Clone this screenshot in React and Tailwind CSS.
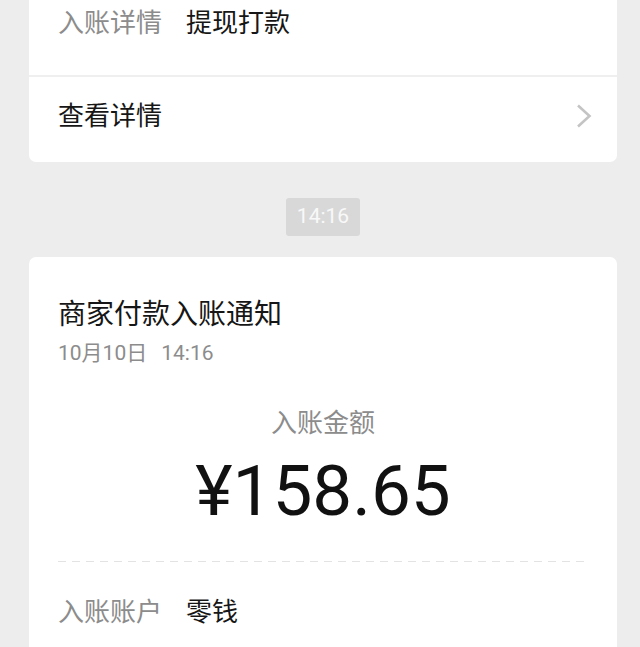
import React from "react";

export default function App() {
  return (
    <div
      className="w-[640px] h-[647px] overflow-hidden bg-[#ededed] font-['Roboto','Noto_Sans_CJK_SC',sans-serif]"
    >
      {/* Card 1 */}
      <div className="ml-[29px] w-[588px] bg-white rounded-b-[7px]">
        <div className="h-[75px] pt-[5px] pl-[29px] flex text-[26px] leading-[36px]">
          <span className="text-[#8c8c8c]">入账详情</span>
          <span className="ml-[24px] text-[#161616]">提现打款</span>
        </div>
        <div className="h-[2px] bg-[#efefef]" />
        <div className="h-[85px] pt-[21px] pl-[29px] pr-[25px] flex justify-between">
          <span className="text-[26px] leading-[36px] text-[#161616]">查看详情</span>
          <svg width="16" height="24" viewBox="0 0 16 24" className="mt-[6px]">
            <polyline
              points="2,1.5 13.5,12 2,22.5"
              fill="none"
              stroke="#c4c4c4"
              strokeWidth="2.6"
            />
          </svg>
        </div>
      </div>

      {/* time chip */}
      <div className="flex justify-center ml-[29px] w-[588px] mt-[36px]">
        <div className="w-[74px] h-[38px] rounded-[3px] bg-[#d8d8d8] flex items-center justify-center text-[21px] text-[#f8f8f8]">
          14:16
        </div>
      </div>

      {/* Card 2 */}
      <div className="ml-[29px] mt-[21px] w-[588px] h-[500px] bg-white rounded-t-[7px] pl-[29px] pr-[29px] pt-[40px]">
        <div className="text-[28px] leading-[36px] text-[#161616]">商家付款入账通知</div>
        <div className="mt-[5px] text-[21px] leading-[30px] text-[#8c8c8c] flex">
          <span>10月10日</span>
          <span className="ml-[14px]">14:16</span>
        </div>
        <div className="mt-[37px] text-center text-[26px] leading-[36px] text-[#8c8c8c]">
          入账金额
        </div>
        <div className="mt-[15px] text-center text-[71px] leading-[70px] text-[#111111]">
          ¥158.65
        </div>
        <div className="mt-[35px] h-[1px] bg-[linear-gradient(to_right,#e3e3e3_8px,transparent_8px)] bg-[length:14px_1px]" />
        <div className="mt-[32px] flex text-[26px] leading-[36px]">
          <span className="text-[#8c8c8c]">入账账户</span>
          <span className="ml-[24px] text-[#161616]">零钱</span>
        </div>
      </div>
    </div>
  );
}
